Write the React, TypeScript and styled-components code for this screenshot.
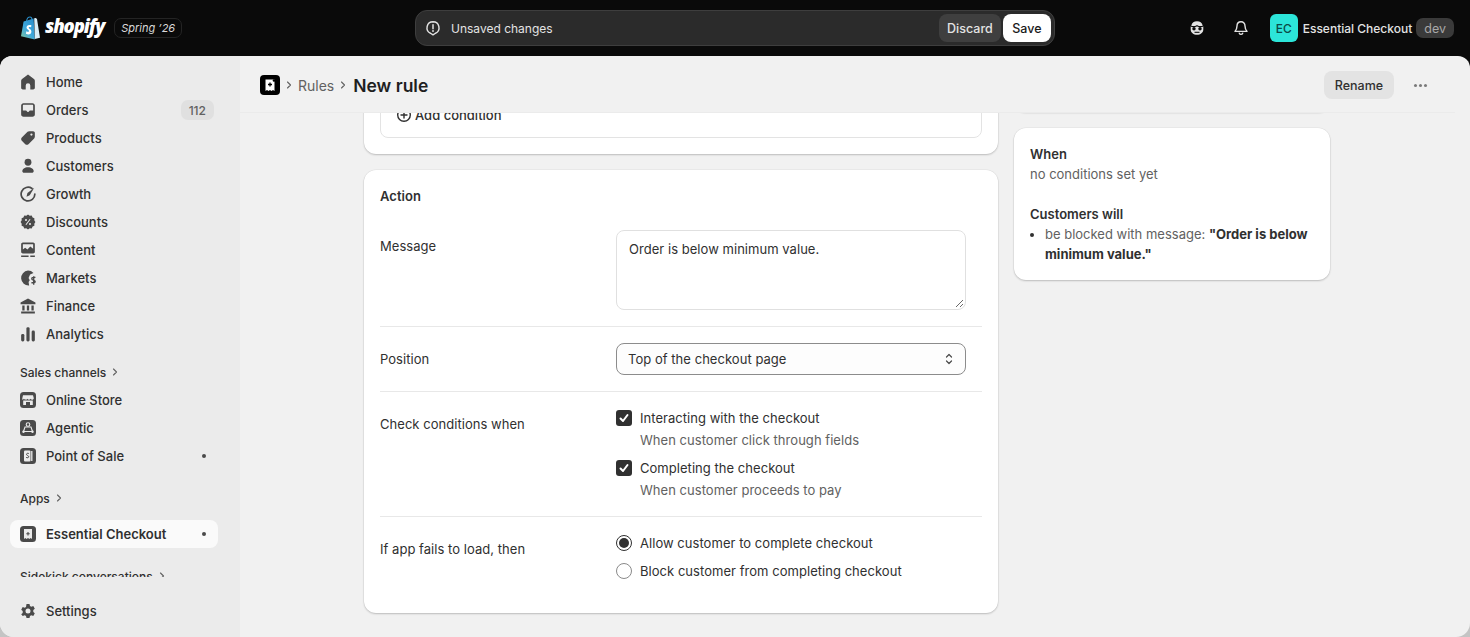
import styled, { createGlobalStyle } from "styled-components";
import type { ReactNode } from "react";

const GlobalStyle = createGlobalStyle`
    html, body {
        margin: 0;
        padding: 0;
        height: 100%;
        background: #0a0a0a;
    }
    body {
        font-family: Inter, "Liberation Sans", sans-serif;
        font-size: 13px;
        color: #303030;
        overflow: hidden;
    }
    * {
        box-sizing: border-box;
    }
`;

const Page = styled.div`
    width: 1470px;
    height: 637px;
    display: flex;
    flex-direction: column;
    background: linear-gradient(#0a0a0a 60%, #c4c4c4 60%);
    overflow: hidden;
`;

/* top bar */
const TopBar = styled.header`
    height: 56px;
    flex: none;
    display: grid;
    grid-template-columns: 1fr 640px 1fr;
    align-items: center;
    padding: 0 16px 0 16px;
    background: #0a0a0a;
`;

const BrandBox = styled.div`
    display: flex;
    align-items: center;
    padding-left: 4px;
`;

const Wordmark = styled.span`
    font-family: "Open Sans", sans-serif;
    font-size: 18.5px;
    font-weight: 800;
    font-style: italic;
    letter-spacing: -1.1px;
    color: #fff;
    margin-left: 4px;
    line-height: 1;
    padding-bottom: 3px;
`;

const SeasonTag = styled.span`
    margin-left: 10px;
    height: 20px;
    padding: 0 6px;
    display: flex;
    align-items: center;
    border: 1px solid #242424;
    border-radius: 7px;
    color: #d8d8d8;
    font-size: 11px;
    font-style: italic;
`;

const SaveBar = styled.div`
    height: 36px;
    display: flex;
    align-items: center;
    padding: 0 3px 0 9px;
    background: #2b2b2b;
    border: 1px solid #3e3e3e;
    border-radius: 12px;
    color: #e3e3e3;
`;

const SaveLabel = styled.span`
    flex: 1;
    margin-left: 10px;
    font-size: 12px;
`;

const BarButton = styled.button<{ $primary?: boolean }>`
    height: 28px;
    padding: 0 ${(p) => (p.$primary ? "9.5px" : "8px")};
    margin-left: 2px;
    border: none;
    border-radius: 8px;
    font: 500 12.5px Inter, sans-serif;
    background: ${(p) => (p.$primary ? "#fff" : "#3f3f3f")};
    color: ${(p) => (p.$primary ? "#1a1a1a" : "#e3e3e3")};
`;

const TopRight = styled.div`
    display: flex;
    align-items: center;
    justify-content: flex-end;
`;

const TopIcon = styled.span<{ $gap: number }>`
    display: flex;
    margin-right: ${(p) => p.$gap}px;
`;

const Avatar = styled.span`
    width: 28px;
    height: 28px;
    border-radius: 6px;
    background: #2ce5d9;
    color: #0b4a48;
    font-size: 12px;
    font-weight: 500;
    display: flex;
    align-items: center;
    justify-content: center;
`;

const StoreName = styled.span`
    color: #e3e3e3;
    font-size: 12px;
    font-weight: 500;
    margin-left: 5px;
`;

const DevTag = styled.span`
    height: 20px;
    padding: 0 8px;
    margin-left: 4px;
    border-radius: 7px;
    background: #3a3a3a;
    color: #a8a8a8;
    font-size: 12.5px;
    display: flex;
    align-items: center;
`;

/* frame under the top bar */
const Frame = styled.div`
    flex: 1;
    min-height: 0;
    display: flex;
    background: #f1f1f1;
    border-radius: 12px 12px 14px 14px;
    overflow: hidden;
`;

const Sidebar = styled.nav`
    width: 240px;
    flex: none;
    background: #ebebeb;
    padding: 12px 22px 12px 10px;
    display: flex;
    flex-direction: column;
`;

const NavList = styled.div`
    flex: 1;
    min-height: 0;
    margin-bottom: 20px;
    overflow: hidden;
    display: flex;
    flex-direction: column;
`;

const NavRow = styled.a<{ $active?: boolean }>`
    height: 28px;
    flex: none;
    display: flex;
    align-items: center;
    padding: 0 4px 0 10px;
    border-radius: 8px;
    background: ${(p) => (p.$active ? "#fafafa" : "transparent")};
    color: #303030;
    font-weight: ${(p) => (p.$active ? 600 : 500)};
`;

const NavIcon = styled.span`
    width: 16px;
    height: 16px;
    display: flex;
    margin-right: 10px;
    flex: none;
`;

const NavLabel = styled.span`
    flex: 1;
`;

const CountBadge = styled.span`
    height: 20px;
    padding: 0 8px;
    border-radius: 7px;
    background: #e0e0e0;
    color: #616161;
    display: flex;
    align-items: center;
    font-size: 12px;
`;

const Dot = styled.span`
    width: 4px;
    height: 4px;
    border-radius: 50%;
    background: #4a4a4a;
    margin-right: 8px;
`;

const SectionTitle = styled.div<{ $top: number; $bottom: number }>`
    height: 20px;
    flex: none;
    display: flex;
    align-items: center;
    padding-left: 10px;
    margin-top: ${(p) => p.$top}px;
    margin-bottom: ${(p) => p.$bottom}px;
    font-size: 12px;
    font-weight: 500;
    color: #303030;

    svg {
        margin-left: 4px;
    }
`;

/* main */
const Main = styled.main`
    flex: 1;
    min-width: 0;
    display: flex;
    flex-direction: column;
`;

const PageHeader = styled.div`
    height: 57px;
    flex: none;
    width: 1215px;
    display: flex;
    align-items: center;
    padding: 2px 27px 0 20px;
    border-bottom: 1px solid #ebebeb;
    background: #f1f1f1;
`;

const AppMark = styled.span`
    width: 20px;
    height: 20px;
    border-radius: 4px;
    background: #000;
    display: flex;
    align-items: center;
    justify-content: center;
`;

const CrumbSep = styled.span`
    display: flex;
    margin: 0 4px;
`;

const CrumbLink = styled.span`
    color: #616161;
    font-size: 14px;
`;

const Title = styled.h1`
    margin: 0 0 0 1px;
    font-size: 17.5px;
    font-weight: 600;
    color: #1f1f1f;
    flex: 1;
`;

const RenameButton = styled.button`
    width: 70px;
    height: 28px;
    padding: 0;
    border: none;
    border-radius: 8px;
    background: #e3e3e3;
    color: #303030;
    font: 500 12.5px Inter, sans-serif;
`;

const MoreButton = styled.span`
    width: 16px;
    margin-left: 18px;
    display: flex;
    gap: 2px;
    justify-content: center;

    i {
        width: 3px;
        height: 3px;
        border-radius: 50%;
        background: #7a7a7a;
    }
`;

const Scroller = styled.div`
    flex: 1;
    min-height: 0;
    overflow: hidden;
    width: 1215px;
    display: grid;
    grid-template-columns: 634px 316px;
    column-gap: 16px;
    align-content: start;
    padding-left: 124px;
`;

const Column = styled.div`
    display: flex;
    flex-direction: column;
    gap: 16px;
`;

const Card = styled.section`
    background: #fff;
    border-radius: 12px;
    box-shadow: 0 1px 2px rgba(0, 0, 0, 0.2), 0 0 0 0.5px rgba(0, 0, 0, 0.06);
`;

const ClippedCard = styled(Card)`
    margin-top: -40px;
    height: 81px;
    padding: 16px;
`;

const ConditionBox = styled.div`
    height: 49px;
    padding: 15px 15px 0;
    border: 1px solid #e3e3e3;
    border-radius: 8px;
    color: #303030;
    font-weight: 500;
    line-height: 20px;

    > div {
        display: flex;
        align-items: center;
        gap: 3px;
    }
`;

const ActionCard = styled(Card)`
    padding: 16px 16px 0;
    height: 443px;
    letter-spacing: 0.04px;
`;

const CardTitle = styled.h2`
    margin: 0;
    font-size: 13px;
    font-weight: 600;
    line-height: 20px;
    color: #303030;
`;

const FormRow = styled.div<{ $top: number; $bottom: number; $divider?: boolean }>`
    display: grid;
    grid-template-columns: 236px 350px;
    padding-top: ${(p) => p.$top}px;
    padding-bottom: ${(p) => p.$bottom}px;
    border-bottom: ${(p) => (p.$divider ? "1px solid #e8e8e8" : "none")};

    > label {
        padding-top: 6px;
        line-height: 20px;
        color: #303030;
    }
`;

const MessageBox = styled.div`
    height: 80px;
    border: 1px solid #e0e0e0;
    border-radius: 8px;
    padding: 9px 12px;
    line-height: 18px;
    position: relative;
    color: #303030;

    svg {
        position: absolute;
        right: 1px;
        bottom: 1px;
    }
`;

const SelectBox = styled.div`
    height: 32px;
    border: 1px solid #8c8c8c;
    border-radius: 8px;
    background: #fdfdfd;
    padding: 0 8px 0 11px;
    display: flex;
    align-items: center;
    justify-content: space-between;
    color: #303030;
`;

const OptionGroup = styled.div`
    display: flex;
    flex-direction: column;
`;

const CheckOption = styled.div`
    display: grid;
    grid-template-columns: 24px 1fr;
    align-items: center;
    line-height: 20px;
    color: #303030;
`;

const CheckBox = styled.span`
    width: 16px;
    height: 16px;
    border-radius: 3px;
    background: #303030;
    display: flex;
    align-items: center;
    justify-content: center;
`;

const Hint = styled.span`
    grid-column: 2;
    color: #616161;
    margin-top: 2px;
    margin-bottom: 8px;
`;

const RadioOption = styled.div`
    display: flex;
    align-items: center;
    gap: 8px;
    height: 20px;
    margin-bottom: 8px;
    color: #303030;
`;

const RadioMark = styled.span<{ $on?: boolean }>`
    width: 16px;
    height: 16px;
    border-radius: 50%;
    background: #fff;
    border: ${(p) => (p.$on ? "1px solid #303030" : "1px solid #8a8a8a")};
    display: flex;
    align-items: center;
    justify-content: center;

    &::after {
        content: "";
        width: 10px;
        height: 10px;
        border-radius: 50%;
        background: ${(p) => (p.$on ? "#303030" : "transparent")};
    }
`;

const HiddenCard = styled(Card)`
    margin-top: -60px;
    height: 59px;
`;

const SummaryCard = styled(Card)`
    height: 152px;
    padding: 16px;
    line-height: 20px;
`;

const SummaryHead = styled.div<{ $gap?: boolean }>`
    font-weight: 600;
    color: #303030;
    margin-top: ${(p) => (p.$gap ? 20 : 0)}px;
`;

const SummaryText = styled.div`
    color: #616161;
`;

const SummaryList = styled.ul`
    margin: 0;
    padding: 0 0 0 15px;
    color: #616161;

    li::marker {
        color: #303030;
    }

    b {
        font-weight: 700;
        color: #303030;
    }
`;

/* icons */
const Svg = ({ children, view = "1 1 14 14", fill = "#4a4a4a" }: { children: ReactNode; view?: string; fill?: string }) => (
    <svg width="16" height="16" viewBox={view} fill={fill}>
        {children}
    </svg>
);

const ShopifyBag = () => (
    <svg width="21" height="24" viewBox="0 0 21 24">
        <defs>
            <linearGradient id="bagFront" x1="0.1" y1="1" x2="0.8" y2="0">
                <stop offset="0" stopColor="#7fc6a0" />
                <stop offset="0.45" stopColor="#3ea8dc" />
                <stop offset="1" stopColor="#2a8fcc" />
            </linearGradient>
        </defs>
        <path d="M1 20.200 3.600 5.600l10-3.200 1.200 21Z" fill="url(#bagFront)" />
        <path d="M14.200 2.200l1.600-.3c.2 0 1 .9 1.200 1L20 21.700 14.800 23Z" fill="#d9eef8" />
        <path d="M6.500 4.800C7 2.600 8.300 1 10 1c1.300 0 1.900 1 2 2.600" fill="none" stroke="#2a8fcc" strokeWidth="1.100" />
        <path d="M11.400 9.300c-.6-.3-1.300-.4-1.900-.4-1.900 0-3 1.300-3 2.600 0 2 2.600 2.300 2.600 3.500 0 .6-.5.9-1 .9-.8 0-1.700-.6-1.700-.6L5.900 17.500s.9 1 2.500 1c1.800 0 3-1.200 3-3 0-2.300-2.700-2.700-2.700-3.700 0-.3.2-.8 1.100-.8.6 0 1.300.3 1.300.3Z" fill="#fff" />
    </svg>
);

const HomeIcon = () => <Svg><path d="M8 1.500 2.800 5.400c-.5.400-.8 1-.8 1.600V13c0 .8.700 1.500 1.500 1.500H6V11a2 2 0 0 1 4 0v3.500h2.500c.8 0 1.500-.7 1.500-1.500V7c0-.6-.3-1.200-.8-1.600Z" /></Svg>;
const OrdersIcon = () => <Svg><path fillRule="evenodd" d="M4 2h8c1.100 0 2 .9 2 2v8c0 1.100-.9 2-2 2H4c-1.100 0-2-.9-2-2V4c0-1.100.9-2 2-2Zm-.5 6.500V4c0-.3.200-.5.500-.5h8c.3 0 .5.200.5.500v4.500h-2.700c-.4 0-.7.300-.8.600-.1.400-.5.700-1 .7s-.9-.3-1-.7c-.1-.3-.4-.6-.8-.6Z" /></Svg>;
const ProductsIcon = () => <Svg><path fillRule="evenodd" d="M9 2h3.500C13.300 2 14 2.700 14 3.500V7c0 .5-.2 1-.6 1.400l-5 5c-.8.800-2 .8-2.800 0L2.600 10.400c-.8-.8-.8-2 0-2.800l5-5C8 2.200 8.500 2 9 2Zm2 4a1 1 0 1 0 0-2 1 1 0 0 0 0 2Z" /></Svg>;
const CustomersIcon = () => <Svg><circle cx="8" cy="4.700" r="3" /><path d="M8 9c-3 0-5 1.600-5 3.700C3 13.500 3.700 14 4.500 14h7c.8 0 1.500-.5 1.500-1.300C13 10.600 11 9 8 9Z" /></Svg>;
const GrowthIcon = () => <Svg fill="none"><path d="M11.500 3.200A6 6 0 1 0 14 8" stroke="#4a4a4a" strokeWidth="1.500" strokeLinecap="round" /><path d="M13.500 2.500 7.500 7.200 6.700 10.300 9.500 9Z" fill="#4a4a4a" /></Svg>;
const DiscountsIcon = () => <Svg view="0 0 16 16"><path fillRule="evenodd" d="M8 .6l1.700 1.100 2-.1.900 1.800 1.800.9-.1 2L15.400 8l-1.100 1.700.1 2-1.800.9-.9 1.800-2-.1L8 15.400l-1.700-1.100-2 .1-.9-1.800-1.800-.9.1-2L.6 8l1.100-1.700-.1-2 1.800-.9.9-1.800 2 .1Zm2.500 4.900-.8-.5-4.200 5.500.8.500ZM6 7a1 1 0 1 0 0-2 1 1 0 0 0 0 2Zm4 4a1 1 0 1 0 0-2 1 1 0 0 0 0 2Z" /></Svg>;
const ContentIcon = () => <Svg><path fillRule="evenodd" d="M3.500 1.500h9c.8 0 1.500.7 1.500 1.500v6.500c0 .8-.7 1.500-1.500 1.500h-9C2.700 11 2 10.300 2 9.500V3c0-.8.7-1.500 1.500-1.500ZM3.500 3v4.500l2-1.500 2 1.500L10 5l2.500 2V3ZM2 12.800h6.500v1.400H2Zm8 0h4v1.400h-4Z" /></Svg>;
const MarketsIcon = () => <Svg><path d="M8 1.500a6.500 6.500 0 0 1 4.800 2.100L9.800 5 8.500 8l1 2-1 1.500.5 3A6.500 6.500 0 1 1 8 1.500Z" /><path d="M14.500 7.500h-2c-.7 0-1.200.4-1.200 1.100 0 1.500 3 1 3 2.500 0 .7-.6 1.100-1.300 1.100h-2M13 6.500v7.500" fill="none" stroke="#4a4a4a" strokeWidth="1.200" /></Svg>;
const FinanceIcon = () => <Svg><path d="M8 1.500 14.500 5v1.500h-13V5ZM3 7.500h2V12H3Zm4 0h2V12H7Zm4 0h2V12h-2ZM2 12.800h12v1.700H2Z" /></Svg>;
const AnalyticsIcon = () => <Svg><rect x="2" y="8" width="2.800" height="6.500" rx="1.200" /><rect x="6.600" y="2" width="2.800" height="12.500" rx="1.200" /><rect x="11.200" y="5" width="2.800" height="9.500" rx="1.200" /></Svg>;

const ChannelFrame = ({ children }: { children: ReactNode }) => (
    <svg width="16" height="16" viewBox="0 0 16 16">
        <rect width="16" height="16" rx="3.500" fill="#4a4a4a" />
        {children}
    </svg>
);

const StoreIcon = () => (
    <ChannelFrame>
        <path d="M3 3.200h10l.8 3c0 .9-.8 1.500-1.600 1.500-.8 0-1.300-.4-1.600-.9-.3.500-.9.900-1.600.9s-1.300-.4-1.500-.9c-.3.500-.9.900-1.600.9S4.200 7.300 3.900 6.800C3.500 7.300 3 7.700 2.300 7.700V6.200Z" fill="#ebebeb" />
        <path d="M3.200 8.500h9.600v4.500H10V10H6v3H3.200Z" fill="#ebebeb" />
    </ChannelFrame>
);

const AgenticIcon = () => (
    <ChannelFrame>
        <circle cx="8" cy="4.500" r="1.800" fill="none" stroke="#ebebeb" strokeWidth="1.100" />
        <path d="M5 7h6l1.500 4.500h-9Z" fill="none" stroke="#ebebeb" strokeWidth="1.100" />
        <circle cx="3.500" cy="11.800" r="1.200" fill="#ebebeb" />
        <circle cx="12.500" cy="11.800" r="1.200" fill="#ebebeb" />
    </ChannelFrame>
);

const PosIcon = () => (
    <ChannelFrame>
        <rect x="4" y="2.500" width="6.500" height="11" rx="1" fill="#ebebeb" />
        <path d="M11.800 3v10" stroke="#ebebeb" strokeWidth="1.300" />
        <path d="M8.800 5.500c-1-.5-2.300-.2-2.300.9 0 1.200 2.200 1 2.200 2.300 0 1.100-1.500 1.300-2.600.7" fill="none" stroke="#4a4a4a" strokeWidth="1" />
    </ChannelFrame>
);

const ReceiptGlyph = () => (
    <svg width="16" height="16" viewBox="0 0 16 16">
        <path d="M3.500 2.500h9v11.500l-1.500-1-1.500 1-1.500-1-1.500 1-1.500-1-1.500 1Z" fill="#fff" />
        <path d="M8 5.500v4M6 7.500h4" stroke="#000" strokeWidth="1.300" />
        <circle cx="12" cy="3.500" r="1.300" fill="#000" />
    </svg>
);

const AppIcon = () => (
    <ChannelFrame>
        <path d="M4 3h8v10l-1.300-.9-1.300.9-1.400-.9-1.400.9-1.300-.9L4 13Z" fill="#ebebeb" />
        <path d="M8 6v3.500M6.300 7.700h3.400" stroke="#4a4a4a" strokeWidth="1.100" />
    </ChannelFrame>
);

const SettingsIcon = () => <Svg view="0 0 16 16"><path fillRule="evenodd" d="M6.500 1h3l.5 2 1.300.7 2-.6 1.500 2.600-1.500 1.400v1.800l1.500 1.400-1.500 2.600-2-.6-1.300.7-.5 2h-3l-.5-2-1.300-.7-2 .6L1.200 11.300l1.500-1.400V8.100L1.200 6.700l1.500-2.600 2 .6L6 4Zm1.500 9.500a2.500 2.500 0 1 0 0-5 2.500 2.500 0 0 0 0 5Z" /></Svg>;

const Chevron = () => (
    <svg width="10" height="10" viewBox="0 0 10 10" fill="none">
        <path d="M3.500 2l3 3-3 3" stroke="#616161" strokeWidth="1.100" strokeLinecap="round" strokeLinejoin="round" />
    </svg>
);

const Tick = () => (
    <svg width="12" height="12" viewBox="0 0 12 12" fill="none">
        <path d="M2.500 6.500 5 9l4.500-6" stroke="#fff" strokeWidth="2" strokeLinecap="round" strokeLinejoin="round" />
    </svg>
);

const GuyIcon = () => (
    <svg width="16" height="16" viewBox="0 0 16 16" fill="none">
        <path d="M2.500 5C3 2.500 5 1.200 8 1.200s5 1.300 5.500 3.800l.8 1.500v3C14.300 12.700 11.500 14.800 8 14.800S1.700 12.700 1.700 9.500v-3Z" fill="#e3e3e3" />
        <path d="M1.700 6c2.100 1 4.300.8 6.300-.3 2 1.100 4.200 1.300 6.300.3" stroke="#0a0a0a" strokeWidth="1.300" />
        <circle cx="5" cy="8.800" r="1.700" fill="#0a0a0a" />
        <circle cx="11" cy="8.800" r="1.700" fill="#0a0a0a" />
        <path d="M5.500 12.300h5" stroke="#0a0a0a" strokeWidth="1.100" />
    </svg>
);

const navMain = [
    { label: "Home", icon: <HomeIcon /> },
    { label: "Orders", icon: <OrdersIcon />, count: 112 },
    { label: "Products", icon: <ProductsIcon /> },
    { label: "Customers", icon: <CustomersIcon /> },
    { label: "Growth", icon: <GrowthIcon /> },
    { label: "Discounts", icon: <DiscountsIcon /> },
    { label: "Content", icon: <ContentIcon /> },
    { label: "Markets", icon: <MarketsIcon /> },
    { label: "Finance", icon: <FinanceIcon /> },
    { label: "Analytics", icon: <AnalyticsIcon /> },
];

const navChannels = [
    { label: "Online Store", icon: <StoreIcon /> },
    { label: "Agentic", icon: <AgenticIcon /> },
    { label: "Point of Sale", icon: <PosIcon />, dot: true },
];

export default function App() {
    return (
        <Page>
            <GlobalStyle />
            <TopBar>
                <BrandBox>
                    <ShopifyBag />
                    <Wordmark>shopify</Wordmark>
                    <SeasonTag>Spring ’26</SeasonTag>
                </BrandBox>
                <SaveBar>
                    <svg width="16" height="16" viewBox="0 0 16 16" fill="none">
                        <path d="M8 1.800a6 6 0 0 1 2.500 11.450L8 14.800l-2.500-1.550A6 6 0 0 1 8 1.800Z" stroke="#e3e3e3" strokeWidth="1.400" strokeLinejoin="round" />
                        <path d="M8 4.800v4" stroke="#e3e3e3" strokeWidth="1.500" strokeLinecap="round" />
                        <circle cx="8" cy="11" r=".9" fill="#e3e3e3" />
                    </svg>
                    <SaveLabel>Unsaved changes</SaveLabel>
                    <BarButton>Discard</BarButton>
                    <BarButton $primary>Save</BarButton>
                </SaveBar>
                <TopRight>
                    <TopIcon $gap={28}><GuyIcon /></TopIcon>
                    <TopIcon $gap={21}>
                        <svg width="16" height="16" viewBox="0 0 16 16" fill="none">
                            <path d="M8 1.800c-2.500 0-4 1.900-4 4.200 0 2.600-.7 3.800-2 5.400h12c-1.300-1.600-2-2.800-2-5.400 0-2.300-1.500-4.200-4-4.200Z" stroke="#e3e3e3" strokeWidth="1.400" strokeLinejoin="round" />
                            <path d="M6.300 13.200c.3.800 1 1.200 1.700 1.200s1.400-.4 1.700-1.200" stroke="#e3e3e3" strokeWidth="1.400" strokeLinecap="round" />
                        </svg>
                    </TopIcon>
                    <Avatar>EC</Avatar>
                    <StoreName>Essential Checkout</StoreName>
                    <DevTag>dev</DevTag>
                </TopRight>
            </TopBar>
            <Frame>
                <Sidebar>
                    <NavList>
                        {navMain.map((item) => (
                            <NavRow key={item.label}>
                                <NavIcon>{item.icon}</NavIcon>
                                <NavLabel>{item.label}</NavLabel>
                                {item.count && <CountBadge>{item.count}</CountBadge>}
                            </NavRow>
                        ))}
                        <SectionTitle $top={14} $bottom={4}>Sales channels<Chevron /></SectionTitle>
                        {navChannels.map((item) => (
                            <NavRow key={item.label}>
                                <NavIcon>{item.icon}</NavIcon>
                                <NavLabel>{item.label}</NavLabel>
                                {item.dot && <Dot />}
                            </NavRow>
                        ))}
                        <SectionTitle $top={18} $bottom={12}>Apps<Chevron /></SectionTitle>
                        <NavRow $active>
                            <NavIcon><AppIcon /></NavIcon>
                            <NavLabel>Essential Checkout</NavLabel>
                            <Dot />
                        </NavRow>
                        <SectionTitle $top={18} $bottom={0}>Sidekick conversations<Chevron /></SectionTitle>
                    </NavList>
                    <NavRow>
                        <NavIcon><SettingsIcon /></NavIcon>
                        <NavLabel>Settings</NavLabel>
                    </NavRow>
                </Sidebar>
                <Main>
                    <PageHeader>
                        <AppMark><ReceiptGlyph /></AppMark>
                        <CrumbSep><Chevron /></CrumbSep>
                        <CrumbLink>Rules</CrumbLink>
                        <CrumbSep><Chevron /></CrumbSep>
                        <Title>New rule</Title>
                        <RenameButton>Rename</RenameButton>
                        <MoreButton><i /><i /><i /></MoreButton>
                    </PageHeader>
                    <Scroller>
                        <Column>
                            <ClippedCard>
                                <ConditionBox>
                                    <div>
                                        <svg width="16" height="16" viewBox="0 0 16 16" fill="none">
                                            <circle cx="8" cy="8" r="6.300" stroke="#303030" strokeWidth="1.400" />
                                            <path d="M8 5v6M5 8h6" stroke="#303030" strokeWidth="1.400" strokeLinecap="round" />
                                        </svg>
                                        Add condition
                                    </div>
                                </ConditionBox>
                            </ClippedCard>
                            <ActionCard>
                                <CardTitle>Action</CardTitle>
                                <FormRow $top={24} $bottom={16} $divider>
                                    <label>Message</label>
                                    <MessageBox>
                                        Order is below minimum value.
                                        <svg width="10" height="10" viewBox="0 0 10 10" fill="none">
                                            <path d="M9 2 2 9M9 6 6 9" stroke="#6a6a6a" strokeWidth="1" />
                                        </svg>
                                    </MessageBox>
                                </FormRow>
                                <FormRow $top={16} $bottom={16} $divider>
                                    <label>Position</label>
                                    <SelectBox>
                                        Top of the checkout page
                                        <svg width="16" height="16" viewBox="0 0 16 16" fill="none">
                                            <path d="M5.500 6 8 3.500 10.500 6M5.500 10 8 12.500 10.500 10" stroke="#4a4a4a" strokeWidth="1.200" strokeLinecap="round" strokeLinejoin="round" />
                                        </svg>
                                    </SelectBox>
                                </FormRow>
                                <FormRow $top={16} $bottom={8} $divider>
                                    <label>Check conditions when</label>
                                    <OptionGroup>
                                        <CheckOption>
                                            <CheckBox><Tick /></CheckBox>
                                            Interacting with the checkout
                                            <Hint>When customer click through fields</Hint>
                                        </CheckOption>
                                        <CheckOption>
                                            <CheckBox><Tick /></CheckBox>
                                            Completing the checkout
                                            <Hint>When customer proceeds to pay</Hint>
                                        </CheckOption>
                                    </OptionGroup>
                                </FormRow>
                                <FormRow $top={16} $bottom={0}>
                                    <label>If app fails to load, then</label>
                                    <OptionGroup>
                                        <RadioOption><RadioMark $on />Allow customer to complete checkout</RadioOption>
                                        <RadioOption><RadioMark />Block customer from completing checkout</RadioOption>
                                    </OptionGroup>
                                </FormRow>
                            </ActionCard>
                        </Column>
                        <Column>
                            <HiddenCard />
                            <SummaryCard>
                                <SummaryHead>When</SummaryHead>
                                <SummaryText>no conditions set yet</SummaryText>
                                <SummaryHead $gap>Customers will</SummaryHead>
                                <SummaryList>
                                    <li>be blocked with message: <b>"Order is below minimum value."</b></li>
                                </SummaryList>
                            </SummaryCard>
                        </Column>
                    </Scroller>
                </Main>
            </Frame>
        </Page>
    );
}
